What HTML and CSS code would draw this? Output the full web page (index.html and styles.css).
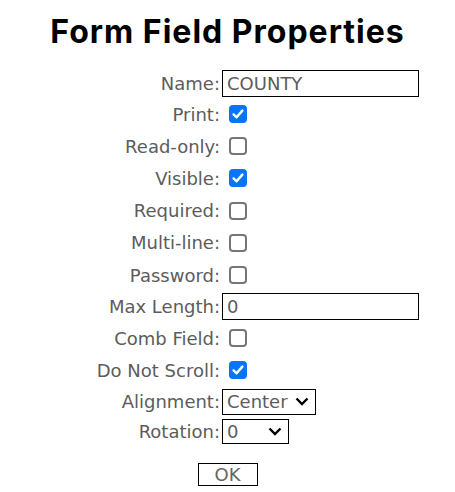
FILE: index.html
```html
<!DOCTYPE html>
<html>
<head>
<meta charset="utf-8">
<link rel="stylesheet" href="styles.css">
</head>
<body>
<h1 class="title">Form Field Properties</h1>
<div class="form">
  <div class="row row-text"><label class="lbl">Name:</label><div class="ctl"><input class="text-input" type="text" value="COUNTY"></div></div>
  <div class="row"><label class="lbl">Print:</label><div class="ctl"><input class="check" type="checkbox" checked></div></div>
  <div class="row"><label class="lbl">Read-only:</label><div class="ctl"><input class="check" type="checkbox"></div></div>
  <div class="row"><label class="lbl">Visible:</label><div class="ctl"><input class="check" type="checkbox" checked></div></div>
  <div class="row"><label class="lbl">Required:</label><div class="ctl"><input class="check" type="checkbox"></div></div>
  <div class="row"><label class="lbl">Multi-line:</label><div class="ctl"><input class="check" type="checkbox"></div></div>
  <div class="row"><label class="lbl">Password:</label><div class="ctl"><input class="check" type="checkbox"></div></div>
  <div class="row row-max"><label class="lbl">Max Length:</label><div class="ctl"><input class="text-input" type="text" value="0"></div></div>
  <div class="row"><label class="lbl">Comb Field:</label><div class="ctl"><input class="check" type="checkbox"></div></div>
  <div class="row"><label class="lbl">Do Not Scroll:</label><div class="ctl"><input class="check" type="checkbox" checked></div></div>
  <div class="row row-align"><label class="lbl">Alignment:</label><div class="ctl"><select class="sel sel-align"><option>Left</option><option selected>Center</option><option>Right</option></select></div></div>
  <div class="row row-rot"><label class="lbl">Rotation:</label><div class="ctl"><select class="sel sel-rot"><option selected>0</option><option>90</option><option>180</option><option>270</option></select></div></div>
</div>
<div class="actions"><button class="ok" type="button">OK</button></div>
</body>
</html>
```
FILE: styles.css
```css
html, body {
  margin: 0;
  padding: 0;
  background: #fff;
}
body {
  font-family: "DejaVu Sans", sans-serif;
  color: #5c5c5c;
}
.title {
  margin: 12px 0 0 0;
  font-family: Inter, "DejaVu Sans", sans-serif;
  font-weight: 700;
  font-size: 32px;
  letter-spacing: 1px;
  line-height: 40px;
  color: #000;
  text-align: center;
}
.form {
  margin-top: 16px;
  display: flex;
  flex-direction: column;
}
.row {
  display: grid;
  grid-template-columns: 220px 1fr;
  column-gap: 2px;
  align-items: center;
  height: 32.2px;
}
.row-text { height: 30px; }
.row-max { height: 31px; }
.row-align { height: 30px; }
.row-rot { height: 29px; }
.lbl {
  text-align: right;
  font-size: 18px;
  white-space: nowrap;
  color: #5c5c5c;
}
.ctl {
  display: flex;
  align-items: center;
}
.text-input {
  box-sizing: border-box;
  width: 197px;
  height: 27px;
  margin: 0;
  padding: 0 4px;
  border: 1px solid #000;
  border-radius: 0;
  font-family: "DejaVu Sans", sans-serif;
  font-size: 18px;
  color: #5c5c5c;
  outline: none;
}
.check {
  appearance: none;
  -webkit-appearance: none;
  box-sizing: border-box;
  width: 18px;
  height: 18px;
  margin: 0 0 0 7px;
  border: 2px solid #767676;
  border-radius: 4px;
  background: #fff;
}
.check:checked {
  border-color: #0b74f5;
  background-color: #0b74f5;
  background-image: url("data:image/svg+xml;utf8,<svg xmlns='http://www.w3.org/2000/svg' width='14' height='14' viewBox='0 0 14 14'><path d='M2.6 7.4 L5.6 10.3 L11.4 3.6' fill='none' stroke='white' stroke-width='2.4' stroke-linecap='round' stroke-linejoin='round'/></svg>");
  background-repeat: no-repeat;
  background-position: center;
  background-size: 14px 14px;
}
.sel {
  box-sizing: border-box;
  appearance: none;
  -webkit-appearance: none;
  height: 26px;
  margin: 0;
  padding: 0 4px;
  border: 1px solid #000;
  border-radius: 0;
  background-color: #fff;
  background-image: url("data:image/svg+xml;utf8,<svg xmlns='http://www.w3.org/2000/svg' width='14' height='9' viewBox='0 0 14 9'><path d='M1.5 1.5 L7 7 L12.5 1.5' fill='none' stroke='black' stroke-width='2.4'/></svg>");
  background-repeat: no-repeat;
  background-position: right 6px center;
  background-size: 14px 9px;
  font-family: "DejaVu Sans", sans-serif;
  font-size: 18px;
  color: #5c5c5c;
  outline: none;
}
.sel-align { width: 94px; }
.sel-rot { width: 67px; height: 25px; }
.actions {
  display: flex;
  justify-content: center;
  margin-top: 17px;
}
.ok {
  box-sizing: border-box;
  width: 60px;
  height: 23px;
  margin: 0;
  padding: 0;
  border: 1px solid #000;
  border-radius: 0;
  background: #fff;
  font-family: "DejaVu Sans", sans-serif;
  font-size: 18px;
  color: #666;
  line-height: 21px;
}
```
